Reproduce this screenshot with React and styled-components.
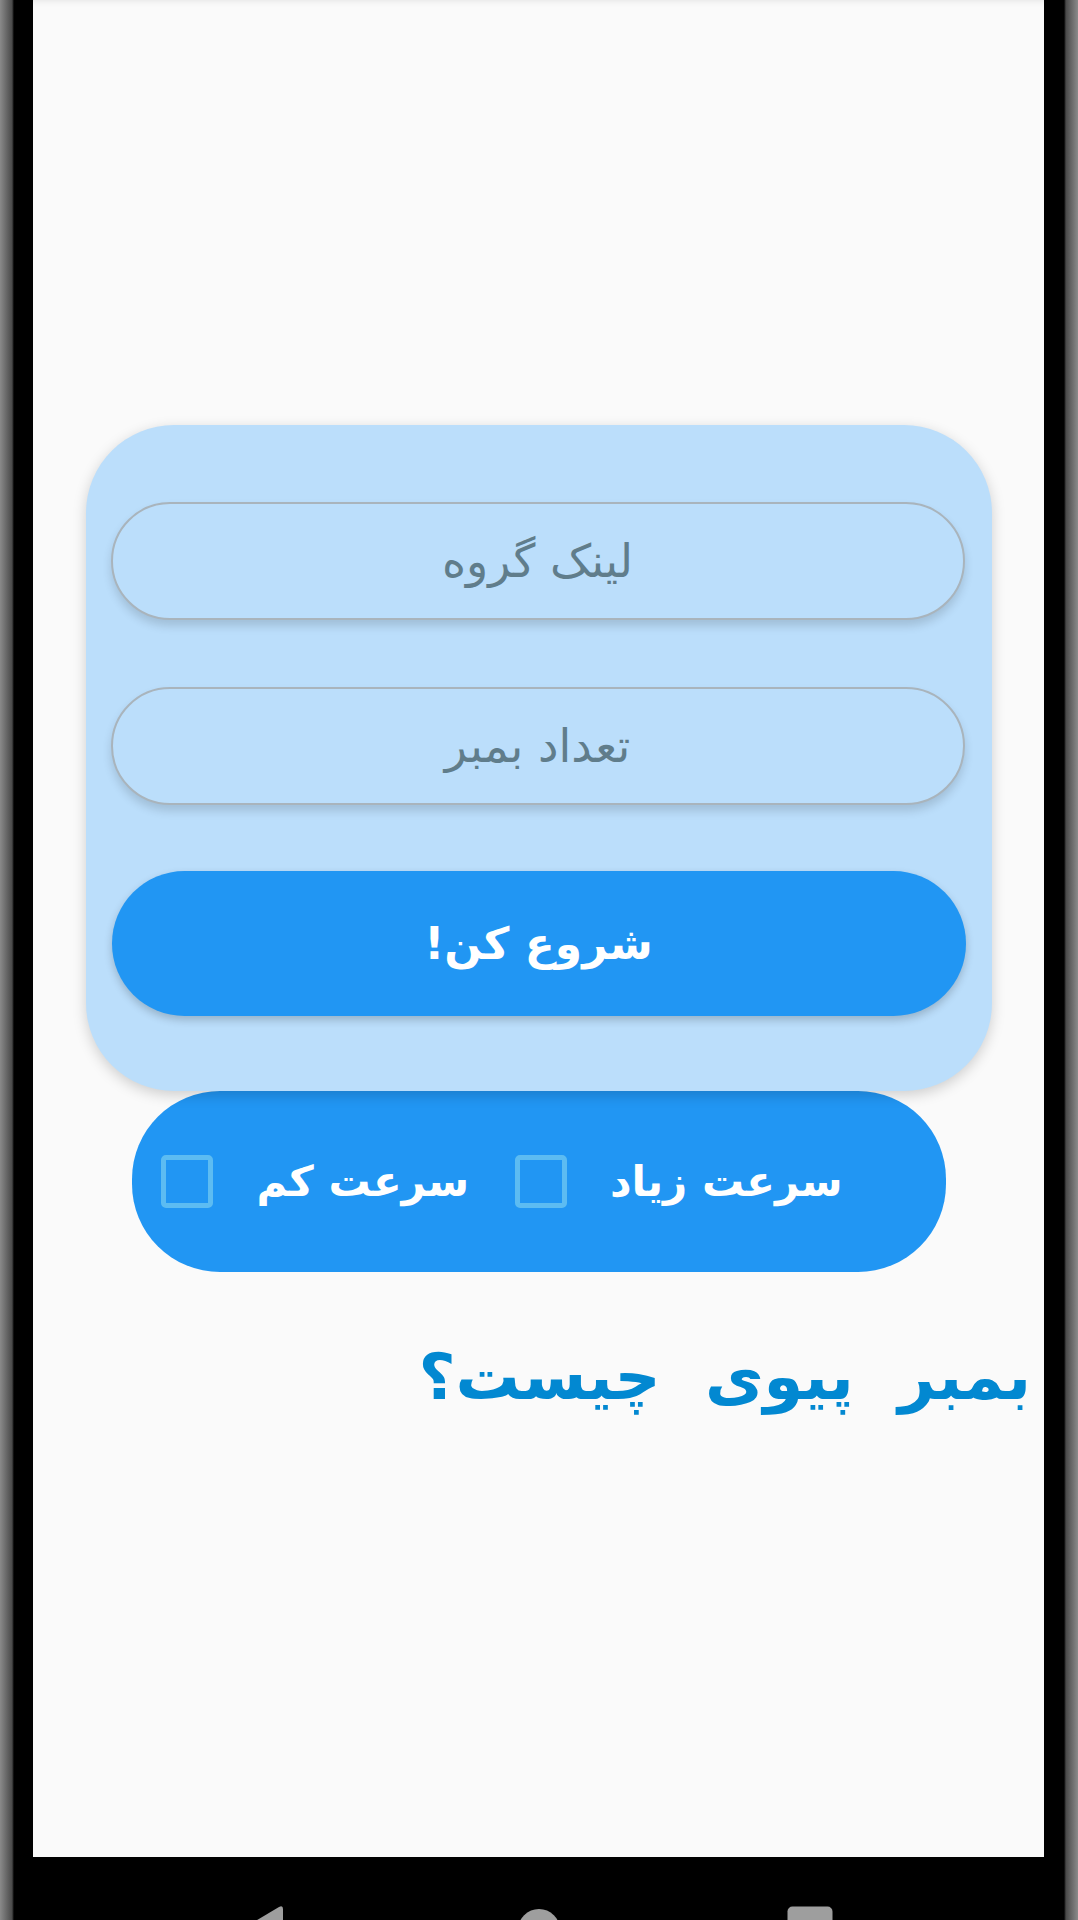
import React, { useState } from 'react';
import styled, { createGlobalStyle } from 'styled-components';

const GlobalStyle = createGlobalStyle`
  html, body {
    margin: 0;
    padding: 0;
    background: #000000;
  }

  * {
    box-sizing: border-box;
  }
`;

const Device = styled.div`
  width: 1078px;
  height: 1920px;
  display: flex;
  flex-direction: column;
  overflow: hidden;
  padding: 0 34px 0 33px;
  background: linear-gradient(
    to right,
    #8a8a8a 0,
    #4a4a4a 12px,
    #000000 14px,
    #000000 1064px,
    #4a4a4a 1066px,
    #8a8a8a 1078px
  );
`;

const Screen = styled.main`
  height: 1857px;
  background: #fafafa;
  display: flex;
  flex-direction: column;
  align-items: center;
  padding-top: 425px;
  box-shadow: inset 0 8px 10px -10px rgba(0, 0, 0, 0.18);
  font-family: 'DejaVu Sans', 'Noto Sans', sans-serif;
  direction: rtl;
`;

const FormCard = styled.form`
  width: 906px;
  background: #bbdefb;
  border-radius: 88px;
  padding: 77px 26px 75px;
  display: flex;
  flex-direction: column;
  gap: 67px;
  box-shadow: 0 4px 14px rgba(0, 0, 0, 0.18);
  position: relative;
  z-index: 1;
`;

const Field = styled.input`
  height: 118px;
  width: 100%;
  margin: 0 1px;
  border: 2px solid #a9b4bc;
  border-radius: 59px;
  background: #bbdefb;
  box-shadow: 0 6px 10px rgba(0, 0, 0, 0.14);
  font-family: inherit;
  font-size: 46px;
  color: #37474f;
  text-align: center;
  direction: rtl;
  outline: none;

  &::placeholder {
    color: #607d8b;
  }
`;

const StartButton = styled.button`
  height: 145px;
  margin-top: -1px;
  border: none;
  border-radius: 73px;
  background: #2196f3;
  color: #ffffff;
  font-family: inherit;
  font-size: 44px;
  font-weight: bold;
  box-shadow: 0 4px 8px rgba(0, 0, 0, 0.2);
  cursor: pointer;
`;

const SpeedBar = styled.div`
  width: 814px;
  height: 181px;
  background: #2196f3;
  border-radius: 88px;
  display: flex;
  align-items: center;
  justify-content: flex-start;
  gap: 46px;
  padding: 0 103px 0 46px;
`;

const SpeedOption = styled.label`
  display: flex;
  align-items: center;
  gap: 43px;
  color: #ffffff;
  font-size: 42px;
  font-weight: bold;
  white-space: nowrap;
  cursor: pointer;
`;

const Box = styled.span`
  flex: none;
  width: 52px;
  height: 53px;
  border: 5px solid #5cbcf2;
  border-radius: 5px;
  background: ${({ checked }) => (checked ? '#5cbcf2' : 'transparent')};
`;

const Title = styled.h2`
  align-self: stretch;
  margin: 68px 13px 0 0;
  color: #0288d1;
  font-size: 64px;
  font-weight: bold;
  word-spacing: 22px;
  text-align: right;
`;

const NavBar = styled.nav`
  height: 63px;
  background: #000000;
  display: flex;
  justify-content: flex-start;
  align-items: flex-start;
  padding-top: 49px;
`;

const NavIcon = styled.svg`
  flex: none;
  fill: #9e9e9e;
  margin: ${({ m }) => m};
`;

export default function App() {
  const [fast, setFast] = useState(false);
  const [slow, setSlow] = useState(false);

  return (
    <>
      <GlobalStyle />
      <Device>
        <Screen>
          <FormCard onSubmit={(e) => e.preventDefault()}>
            <Field placeholder="لینک گروه" />
            <Field placeholder="تعداد بمبر" />
            <StartButton type="submit">شروع کن!</StartButton>
          </FormCard>
          <SpeedBar>
            <SpeedOption onClick={() => setFast(!fast)}>
              سرعت زیاد
              <Box checked={fast} />
            </SpeedOption>
            <SpeedOption onClick={() => setSlow(!slow)}>
              سرعت کم
              <Box checked={slow} />
            </SpeedOption>
          </SpeedBar>
          <Title>بمبر پیوی چیست؟</Title>
        </Screen>
        <NavBar>
          <NavIcon width="50" height="52" viewBox="0 0 50 52" m="0 0 0 203px">
            <path d="M47 3 L47 49 Q47 53 43 51 L6 29 Q2 26 6 23 L43 1 Q47 -1 47 3 Z" />
          </NavIcon>
          <NavIcon width="44" height="44" viewBox="0 0 44 44" m="2px 0 0 231px">
            <circle cx="22" cy="22" r="21" />
          </NavIcon>
          <NavIcon width="46" height="46" viewBox="0 0 46 46" m="0 0 0 226px">
            <rect x="0.5" y="0.5" width="45" height="45" rx="5" />
          </NavIcon>
        </NavBar>
      </Device>
    </>
  );
}
